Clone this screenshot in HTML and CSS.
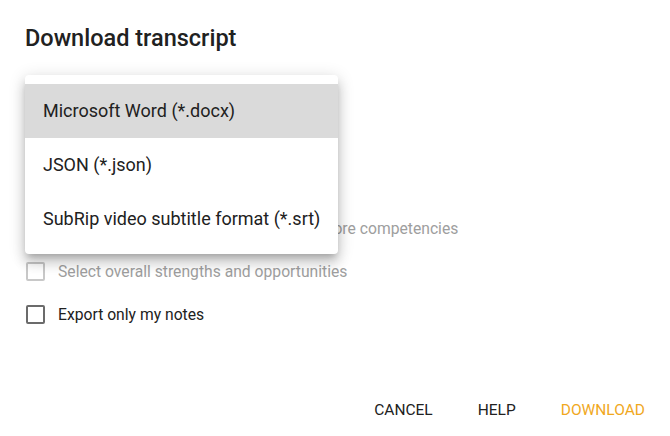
FILE: index.html
```html
<!DOCTYPE html>
<html>
<head>
<meta charset="utf-8">
<link rel="stylesheet" href="styles.css">
</head>
<body>
<div class="dialog">
  <h1 class="title">Download transcript</h1>
  <div class="content">
    <div class="field"></div>
    <label class="row disabled"><span class="box"></span><span class="label">Select strengths and opportunities for core competencies</span></label>
    <label class="row disabled"><span class="box"></span><span class="label">Select overall strengths and opportunities</span></label>
    <label class="row"><span class="box"></span><span class="label">Export only my notes</span></label>
  </div>
  <div class="actions">
    <button class="btn">CANCEL</button>
    <button class="btn">HELP</button>
    <button class="btn primary">DOWNLOAD</button>
  </div>
  <ul class="menu">
    <li class="item active">Microsoft Word (*.docx)</li>
    <li class="item">JSON (*.json)</li>
    <li class="item">SubRip video subtitle format (*.srt)</li>
  </ul>
</div>
</body>
</html>
```
FILE: styles.css
```css
html, body {
  margin: 0;
  padding: 0;
  background: #ffffff;
}
body {
  font-family: Roboto, "Noto Sans", sans-serif;
  color: #212121;
  width: 670px;
  height: 436px;
  overflow: hidden;
}
.dialog {
  position: relative;
  padding: 22px 25px 0 25px;
  height: 436px;
  box-sizing: border-box;
}
.title {
  margin: 0;
  font-size: 23.5px;
  font-weight: 500;
  line-height: 32px;
  color: #212121;
}
.content {
  margin-top: 21px;
  display: flex;
  flex-direction: column;
}
.field {
  height: 56px;
  margin-bottom: 75.5px;
}
.row {
  display: flex;
  align-items: center;
  height: 43px;
  font-size: 15.7px;
}
.box {
  width: 15px;
  height: 15px;
  border: 2px solid #6b6b6b;
  border-radius: 2px;
  margin-left: 1px;
  margin-right: 13px;
  flex: none;
}
.row.disabled .box {
  border-color: #c8c8c8;
}
.row.disabled .label {
  color: #9e9e9e;
}
.actions {
  margin-top: 62.5px;
  display: flex;
  justify-content: flex-end;
  gap: 45px;
}
.btn {
  background: none;
  border: none;
  padding: 0;
  font-family: Roboto, "Noto Sans", sans-serif;
  font-size: 15.5px;
  font-weight: 400;
  color: #212121;
  line-height: 24px;
}
.btn.primary {
  color: #f0a81e;
}
.menu {
  position: absolute;
  top: 75px;
  left: 25px;
  width: 313px;
  margin: 0;
  padding: 9px 0 8px 0;
  list-style: none;
  background: #ffffff;
  border-radius: 4px;
  box-shadow: 0 5px 6px -3px rgba(0,0,0,0.2), 0 9px 12px 1px rgba(0,0,0,0.14), 0 3px 16px 2px rgba(0,0,0,0.12);
}
.item {
  height: 54px;
  line-height: 54px;
  padding-left: 18px;
  font-size: 18px;
  color: #212121;
}
.item.active {
  background: #dadada;
}
```
